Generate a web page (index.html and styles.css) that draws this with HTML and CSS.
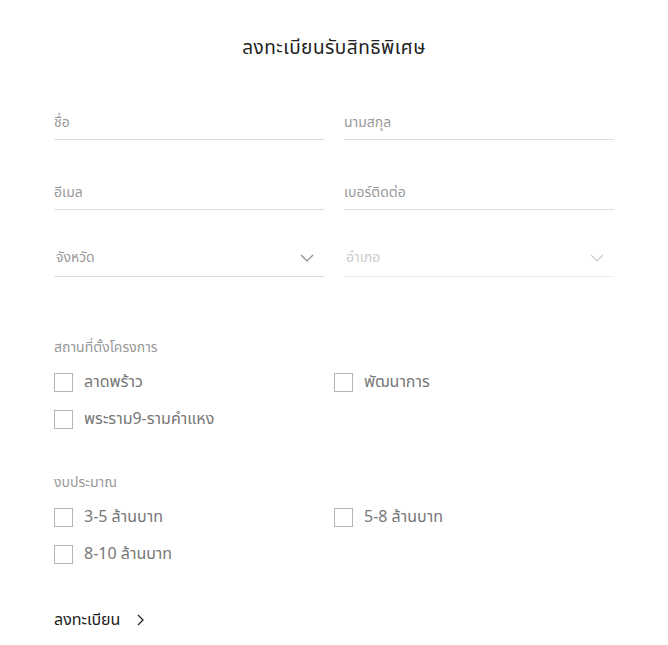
FILE: index.html
```html
<!DOCTYPE html>
<html>
<head>
  <meta charset="utf-8">
  <title>ลงทะเบียนรับสิทธิพิเศษ</title>
  <link rel="stylesheet" href="styles.css">
</head>
<body>
  <div class="register">
    <h2 class="heading">ลงทะเบียนรับสิทธิพิเศษ</h2>

    <div class="fields">
      <div class="field"><span class="placeholder">ชื่อ</span></div>
      <div class="field"><span class="placeholder">นามสกุล</span></div>
      <div class="field"><span class="placeholder">อีเมล</span></div>
      <div class="field"><span class="placeholder">เบอร์ติดต่อ</span></div>
      <div class="field select">
        <span class="placeholder">จังหวัด</span>
        <svg class="chevron" width="14" height="8" viewBox="0 0 14 8"><path d="M1 1 L7 7 L13 1" fill="none" stroke="#888" stroke-width="1.2"/></svg>
      </div>
      <div class="field select disabled">
        <span class="placeholder">อำเภอ</span>
        <svg class="chevron" width="14" height="8" viewBox="0 0 14 8"><path d="M1 1 L7 7 L13 1" fill="none" stroke="#ccc" stroke-width="1.2"/></svg>
      </div>
    </div>

    <div class="group">
      <p class="group-label">สถานที่ตั้งโครงการ</p>
      <div class="options">
        <label class="option"><span class="box"></span>ลาดพร้าว</label>
        <label class="option"><span class="box"></span>พัฒนาการ</label>
        <label class="option"><span class="box"></span>พระราม9-รามคำแหง</label>
      </div>
    </div>

    <div class="group">
      <p class="group-label">งบประมาณ</p>
      <div class="options">
        <label class="option"><span class="box"></span>3-5 ล้านบาท</label>
        <label class="option"><span class="box"></span>5-8 ล้านบาท</label>
        <label class="option"><span class="box"></span>8-10 ล้านบาท</label>
      </div>
    </div>

    <button class="submit" type="button">ลงทะเบียน
      <svg width="10" height="12" viewBox="0 0 10 12"><path d="M2 1 L7 6 L2 11" fill="none" stroke="#222" stroke-width="1.3"/></svg>
    </button>
  </div>
</body>
</html>
```

FILE: styles.css
```css
body {
  margin: 0;
  background: #fff;
  font-family: "Noto Sans", "Noto Sans Thai", sans-serif;
  color: #222;
}

.register {
  width: 560px;
  margin: 0 auto;
  padding-top: 34px;
}

.heading {
  margin: 0 0 46px;
  text-align: center;
  font-size: 19px;
  font-weight: 400;
  letter-spacing: 0.5px;
  line-height: 26px;
}

/* text inputs */
.fields {
  display: grid;
  grid-template-columns: 1fr 1fr;
  column-gap: 20px;
  row-gap: 36px;
}

.field {
  display: flex;
  align-items: center;
  justify-content: space-between;
  height: 34px;
  border-bottom: 1px solid #ddd;
  box-sizing: border-box;
  padding: 1px 2px 1px 0;
}

.field.select {
  height: 31px;
  padding: 0 10px 7px 0;
}

.placeholder {
  font-size: 14px;
  color: #999;
}

.select .placeholder {
  padding-left: 2px;
}

.disabled {
  border-bottom-color: #eee;
}

.disabled .placeholder {
  color: #ccc;
}

/* checkbox groups */
.group {
  margin-top: 60px;
}

.group + .group {
  margin-top: 43px;
}

.group-label {
  margin: 0 0 14px;
  font-size: 14px;
  color: #999;
}

.options {
  display: grid;
  grid-template-columns: 1fr 1fr;
  row-gap: 17px;
}

.option {
  display: flex;
  align-items: center;
  font-size: 16px;
  color: #777;
  height: 20px;
}

.box {
  width: 17px;
  height: 17px;
  border: 1px solid #b5b5b5;
  margin-right: 11px;
  flex-shrink: 0;
}

.submit {
  display: flex;
  align-items: center;
  gap: 16px;
  margin-top: 44px;
  padding: 0;
  border: none;
  background: none;
  font-family: inherit;
  font-size: 16px;
  color: #222;
  cursor: pointer;
}
```
